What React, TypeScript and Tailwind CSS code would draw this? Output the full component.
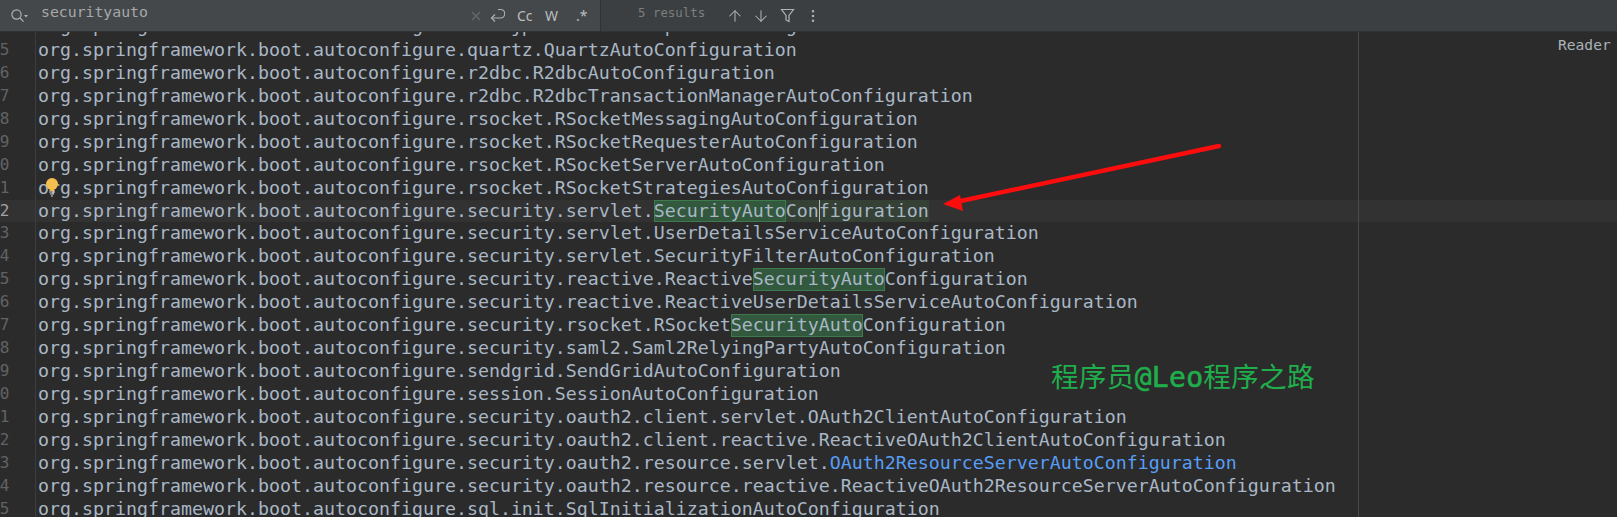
import { ArrowDown, ArrowUp, EllipsisVertical } from "lucide-react";

const PKG = "org.springframework.boot.autoconfigure.";

type Row = { no: number; text: string; hit?: string; blue?: string };

const ROWS: Row[] = [
  { no: 104, text: "orm.jpa.HibernateJpaAutoConfiguration" },
  { no: 105, text: "quartz.QuartzAutoConfiguration" },
  { no: 106, text: "r2dbc.R2dbcAutoConfiguration" },
  { no: 107, text: "r2dbc.R2dbcTransactionManagerAutoConfiguration" },
  { no: 108, text: "rsocket.RSocketMessagingAutoConfiguration" },
  { no: 109, text: "rsocket.RSocketRequesterAutoConfiguration" },
  { no: 110, text: "rsocket.RSocketServerAutoConfiguration" },
  { no: 111, text: "rsocket.RSocketStrategiesAutoConfiguration" },
  { no: 112, text: "security.servlet." },
  { no: 113, text: "security.servlet.UserDetailsServiceAutoConfiguration" },
  { no: 114, text: "security.servlet.SecurityFilterAutoConfiguration" },
  { no: 115, text: "security.reactive.Reactive", hit: "Configuration" },
  { no: 116, text: "security.reactive.ReactiveUserDetailsServiceAutoConfiguration" },
  { no: 117, text: "security.rsocket.RSocket", hit: "Configuration" },
  { no: 118, text: "security.saml2.Saml2RelyingPartyAutoConfiguration" },
  { no: 119, text: "sendgrid.SendGridAutoConfiguration" },
  { no: 120, text: "session.SessionAutoConfiguration" },
  { no: 121, text: "security.oauth2.client.servlet.OAuth2ClientAutoConfiguration" },
  { no: 122, text: "security.oauth2.client.reactive.ReactiveOAuth2ClientAutoConfiguration" },
  { no: 123, text: "security.oauth2.resource.servlet.", blue: "OAuth2ResourceServerAutoConfiguration" },
  { no: 124, text: "security.oauth2.resource.reactive.ReactiveOAuth2ResourceServerAutoConfiguration" },
  { no: 125, text: "sql.init.SqlInitializationAutoConfiguration" },
];

function Match({ children }: { children: string }) {
  return <span className="inline-block h-[22.95px] bg-[#32593d] outline outline-1 -outline-offset-1 outline-[#3d7a4e]">{children}</span>;
}

function CodeRow({ row }: { row: Row }) {
  const current = row.no === 112;
  return (
    <div className={`flex h-[22.95px] ${current ? "bg-[#323232]" : ""} ${row.no === 104 ? "relative -top-[1px]" : ""}`}>
      <div className={`w-[36px] shrink-0 overflow-hidden border-r border-[#3d3d3d] ${current ? "text-[#a4a3a3]" : "text-[#606366]"}`}>
        <div className="ml-[-19.5px] text-[16px]">{row.no}</div>
      </div>
      <div className="pl-[2px] whitespace-pre text-[#a9b7c6]">
        {PKG}
        {row.text}
        {current && (
          <span className="relative inline-block bg-[#344134]">
            <Match>SecurityAuto</Match>
            Con
            <span className="absolute left-[165px] top-0 h-[22.95px] w-[1.5px] bg-[#bbbbbb]" />
            figuration
          </span>
        )}
        {row.hit && (
          <>
            <Match>SecurityAuto</Match>
            {row.hit}
          </>
        )}
        {row.blue && <span className="text-[#589df6]">{row.blue}</span>}
      </div>
    </div>
  );
}

function ToolIcon({ children, w }: { children: React.ReactNode; w: string }) {
  return <div className={`flex items-center justify-center ${w}`}>{children}</div>;
}

export default function App() {
  return (
    <div className="relative flex h-[517px] w-[1617px] flex-col overflow-hidden bg-[#2b2b2b] font-['DejaVu_Sans_Mono',monospace]">
      {/* find bar */}
      <header className="z-10 flex h-[32px] shrink-0 items-center border-b border-[#323232] bg-[#3c3f41] text-[14.8px]">
        <div className="flex h-full w-[601px] shrink-0 items-center border-r border-[#323232] bg-[#45484a]">
          <svg className="ml-[10px] h-[16px] w-[18px]" viewBox="0 0 18 16" fill="none" stroke="#afb1b3" strokeWidth="1.2">
            <circle cx="6.5" cy="6.5" r="4.6" />
            <path d="M10 10l3.6 3.6" />
            <path d="M14 7h4l-2 2.4z" fill="#afb1b3" stroke="none" />
          </svg>
          <span className="ml-[13px] flex-1 pb-[6px] text-[#a5a9ab]">securityauto</span>
          <ToolIcon w="w-[24px] pl-[6px]">
            <svg className="h-[12px] w-[12px]" viewBox="0 0 12 12" stroke="#676a6c" strokeWidth="1.2">
              <path d="M2 2l8 8M10 2l-8 8" />
            </svg>
          </ToolIcon>
          <ToolIcon w="w-[26px] pr-[2px]">
            <svg className="h-[16px] w-[16px]" viewBox="0 0 16 16" fill="none" stroke="#afb1b3" strokeWidth="1.2">
              <path d="M9 1.5h2.5a3.5 3.5 0 0 1 0 8.5H2.5" />
              <path d="M6 6.5L2.5 10 6 13.5" />
            </svg>
          </ToolIcon>
          <span className="ml-[6px] w-[27px] font-['Noto_Sans',sans-serif] text-[14px] text-[#bcbec0]">Cc</span>
          <span className="w-[28px] pl-[1px] font-['Noto_Sans',sans-serif] text-[14px] text-[#bcbec0]">W</span>
          <span className="w-[28px] pl-[4px] font-['Noto_Sans',sans-serif] text-[14px] text-[#bcbec0]">.*</span>
        </div>
        <span className="ml-[37px] pb-[5px] text-[12.4px] text-[#7b7e80]">5 results</span>
        <ToolIcon w="ml-[17px] w-[26px]">
          <ArrowUp size={18} strokeWidth={1.4} color="#afb1b3" />
        </ToolIcon>
        <ToolIcon w="w-[26px]">
          <ArrowDown size={18} strokeWidth={1.4} color="#afb1b3" />
        </ToolIcon>
        <ToolIcon w="w-[26px]">
          <svg className="h-[15px] w-[15px]" viewBox="0 0 15 15" fill="none" stroke="#afb1b3" strokeWidth="1.2">
            <path d="M1.5 1.5h12L9 7.5v6l-3-1.5V7.5z" />
          </svg>
        </ToolIcon>
        <ToolIcon w="w-[26px]">
          <EllipsisVertical size={16} strokeWidth={1.8} color="#afb1b3" />
        </ToolIcon>
      </header>

      {/* editor */}
      <main className="relative flex-1 overflow-hidden text-[18.27px] leading-[22px]">
        <div className="mt-[-16px]">
          {ROWS.map((row) => (
            <CodeRow key={row.no} row={row} />
          ))}
        </div>
        <div className="absolute left-[1358px] top-0 h-full w-px bg-[#4a4a4a]" />
        <span className="absolute left-[1558px] top-[2px] text-[14.6px] leading-[22px] text-[#a9b3b9]">Reader</span>

        {/* intention bulb */}
        <svg className="absolute left-[45px] top-[145px] h-[22px] w-[14px]" viewBox="0 0 14 22">
          <circle cx="7" cy="7" r="6" fill="#f4bf4f" />
          <path d="M4.5 12.5h5v1.5h-5z" fill="#f4bf4f" />
          <path d="M4 15h6M5 17h4M6 19h2" stroke="#d6d6d6" strokeWidth="1.1" />
        </svg>

        {/* annotation */}
        <svg className="pointer-events-none absolute left-[930px] top-[100px] h-[90px] w-[300px]" viewBox="0 0 300 90">
          <path d="M289 14L26 70" stroke="#fb0d0d" strokeWidth="4.4" strokeLinecap="round" />
          <path d="M13 72L30 63L33 79z" fill="#fb0d0d" />
        </svg>
        <div className="absolute left-[1051px] top-[323px] font-['Noto_Sans_CJK_SC',sans-serif] text-[27.6px] leading-[40px] tracking-[0.3px] text-[#1fae4b]">
          程序员<span className="font-['DejaVu_Sans_Mono',monospace] text-[28px] [-webkit-text-stroke:0.6px_#1fae4b]">@Leo</span>程序之路
        </div>
      </main>
    </div>
  );
}
